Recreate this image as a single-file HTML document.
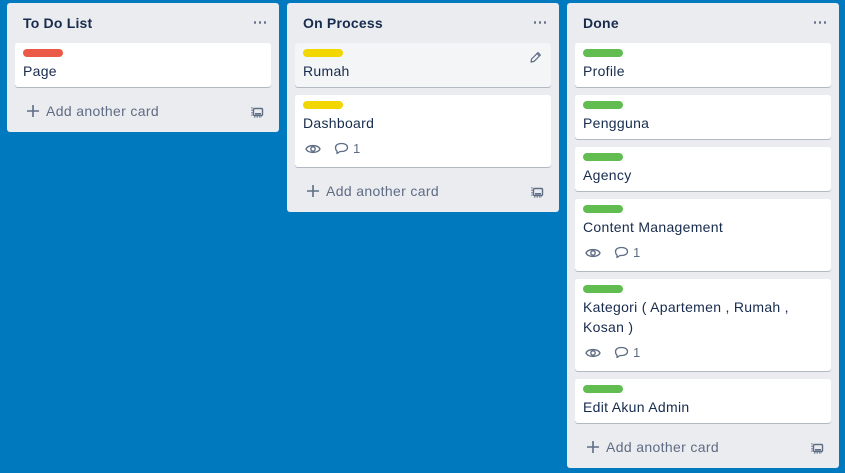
<!DOCTYPE html>
<html><head><meta charset="utf-8"><style>
*{box-sizing:border-box;margin:0;padding:0}
body{width:845px;height:473px;background:#0079bf;font-family:"Liberation Sans",sans-serif;color:#172b4d;position:relative;overflow:hidden}
.list{position:absolute;width:272px;background:#ebecf0;border-radius:3px;top:3px}
.h{position:absolute;left:16px;top:12px;font-weight:bold;font-size:14px;line-height:16px;letter-spacing:.2px}
.dots{position:absolute;right:13px;top:18px;display:flex;gap:2.5px}
.dots i{width:2.5px;height:2.5px;border-radius:50%;background:#6b778c}
.card{position:absolute;left:8px;width:256px;background:#fff;border-radius:3px;box-shadow:0 1px 0 rgba(9,30,66,.25)}
.lab{position:absolute;left:8px;top:6px;width:40px;height:8px;border-radius:4px}
.t{position:absolute;left:8px;top:18px;font-size:14px;line-height:20px;width:232px;letter-spacing:.3px}
.b{position:absolute;left:10px;font-size:13px;color:#5e6c84;display:flex;align-items:center}
.add{position:absolute;left:19px;font-size:14px;color:#5e6c84;line-height:20px;letter-spacing:.35px;display:flex;align-items:center}
.add svg{margin-right:6px}
.tpl{position:absolute;right:15px}
.g{background:#61bd4f}.y{background:#f2d600}.r{background:#eb5a46}
</style></head><body>

<div class="list" style="left:7px;height:129px">
<div class="h">To Do List</div><div class="dots"><i></i><i></i><i></i></div>
<div class="card" style="top:40px;height:44px"><div class="lab r"></div><div class="t">Page</div></div>
<div class="add" style="top:98px"><svg width="14" height="14" viewBox="0 0 14 14"><path d="M7 1v12M1 7h12" stroke="#5e6c84" stroke-width="1.6"/></svg>Add another card</div>
<svg class="tpl" style="top:102px" width="13" height="13" viewBox="0 0 13 13"><rect x="2.5" y="3.5" width="9" height="7" rx="1" fill="none" stroke="#5e6c84" stroke-width="1.4"/><path d="M1 2v9M3 12h8" stroke="#5e6c84" stroke-width="1" stroke-dasharray="1.5 1"/><rect x="4" y="8" width="6" height="1.5" fill="#5e6c84"/></svg>
</div>

<div class="list" style="left:287px;height:209px">
<div class="h">On Process</div><div class="dots"><i></i><i></i><i></i></div>
<div class="card" style="top:40px;height:44px;background:#f4f5f7"><div class="lab y"></div><div class="t">Rumah</div>
<svg style="position:absolute;right:9px;top:8px" width="13" height="13" viewBox="0 0 13 13"><path d="M2 11l.6-3L9 1.6l2.4 2.4L5 10.4z M8 2.6l2.4 2.4" fill="none" stroke="#5e6c84" stroke-width="1.2" stroke-linejoin="round"/></svg></div>
<div class="card" style="top:92px;height:72px"><div class="lab y"></div><div class="t">Dashboard</div>
<div class="b" style="top:46px"><svg width="16" height="12" viewBox="0 0 16 12"><path d="M1 6C3 1.5 13 1.5 15 6C13 10.5 3 10.5 1 6z" fill="none" stroke="#5e6c84" stroke-width="1.4"/><circle cx="8" cy="6" r="2.2" fill="none" stroke="#5e6c84" stroke-width="1.4"/></svg>
<svg style="margin-left:13px" width="15" height="13" viewBox="0 0 15 13"><path d="M7.5 1.5C11 1.5 13.5 3 13.5 5.5S11 9.5 7.5 9.5H6L3 11.5V9C2 8.3 1.5 7 1.5 5.5 1.5 3 4 1.5 7.5 1.5z" fill="none" stroke="#5e6c84" stroke-width="1.3" stroke-linejoin="round"/></svg><span style="margin-left:4px">1</span></div></div>
<div class="add" style="top:178px"><svg width="14" height="14" viewBox="0 0 14 14"><path d="M7 1v12M1 7h12" stroke="#5e6c84" stroke-width="1.6"/></svg>Add another card</div>
<svg class="tpl" style="top:182px" width="13" height="13" viewBox="0 0 13 13"><rect x="2.5" y="3.5" width="9" height="7" rx="1" fill="none" stroke="#5e6c84" stroke-width="1.4"/><path d="M1 2v9M3 12h8" stroke="#5e6c84" stroke-width="1" stroke-dasharray="1.5 1"/><rect x="4" y="8" width="6" height="1.5" fill="#5e6c84"/></svg>
</div>

<div class="list" style="left:567px;height:465px">
<div class="h">Done</div><div class="dots"><i></i><i></i><i></i></div>
<div class="card" style="top:40px;height:44px"><div class="lab g"></div><div class="t">Profile</div></div>
<div class="card" style="top:92px;height:44px"><div class="lab g"></div><div class="t">Pengguna</div></div>
<div class="card" style="top:144px;height:44px"><div class="lab g"></div><div class="t">Agency</div></div>
<div class="card" style="top:196px;height:72px"><div class="lab g"></div><div class="t">Content Management</div>
<div class="b" style="top:46px"><svg width="16" height="12" viewBox="0 0 16 12"><path d="M1 6C3 1.5 13 1.5 15 6C13 10.5 3 10.5 1 6z" fill="none" stroke="#5e6c84" stroke-width="1.4"/><circle cx="8" cy="6" r="2.2" fill="none" stroke="#5e6c84" stroke-width="1.4"/></svg>
<svg style="margin-left:13px" width="15" height="13" viewBox="0 0 15 13"><path d="M7.5 1.5C11 1.5 13.5 3 13.5 5.5S11 9.5 7.5 9.5H6L3 11.5V9C2 8.3 1.5 7 1.5 5.5 1.5 3 4 1.5 7.5 1.5z" fill="none" stroke="#5e6c84" stroke-width="1.3" stroke-linejoin="round"/></svg><span style="margin-left:4px">1</span></div></div>
<div class="card" style="top:276px;height:92px"><div class="lab g"></div><div class="t">Kategori ( Apartemen , Rumah , Kosan )</div>
<div class="b" style="top:66px"><svg width="16" height="12" viewBox="0 0 16 12"><path d="M1 6C3 1.5 13 1.5 15 6C13 10.5 3 10.5 1 6z" fill="none" stroke="#5e6c84" stroke-width="1.4"/><circle cx="8" cy="6" r="2.2" fill="none" stroke="#5e6c84" stroke-width="1.4"/></svg>
<svg style="margin-left:13px" width="15" height="13" viewBox="0 0 15 13"><path d="M7.5 1.5C11 1.5 13.5 3 13.5 5.5S11 9.5 7.5 9.5H6L3 11.5V9C2 8.3 1.5 7 1.5 5.5 1.5 3 4 1.5 7.5 1.5z" fill="none" stroke="#5e6c84" stroke-width="1.3" stroke-linejoin="round"/></svg><span style="margin-left:4px">1</span></div></div>
<div class="card" style="top:376px;height:44px"><div class="lab g"></div><div class="t">Edit Akun Admin</div></div>
<div class="add" style="top:434px"><svg width="14" height="14" viewBox="0 0 14 14"><path d="M7 1v12M1 7h12" stroke="#5e6c84" stroke-width="1.6"/></svg>Add another card</div>
<svg class="tpl" style="top:438px" width="13" height="13" viewBox="0 0 13 13"><rect x="2.5" y="3.5" width="9" height="7" rx="1" fill="none" stroke="#5e6c84" stroke-width="1.4"/><path d="M1 2v9M3 12h8" stroke="#5e6c84" stroke-width="1" stroke-dasharray="1.5 1"/><rect x="4" y="8" width="6" height="1.5" fill="#5e6c84"/></svg>
</div>

</body></html>
